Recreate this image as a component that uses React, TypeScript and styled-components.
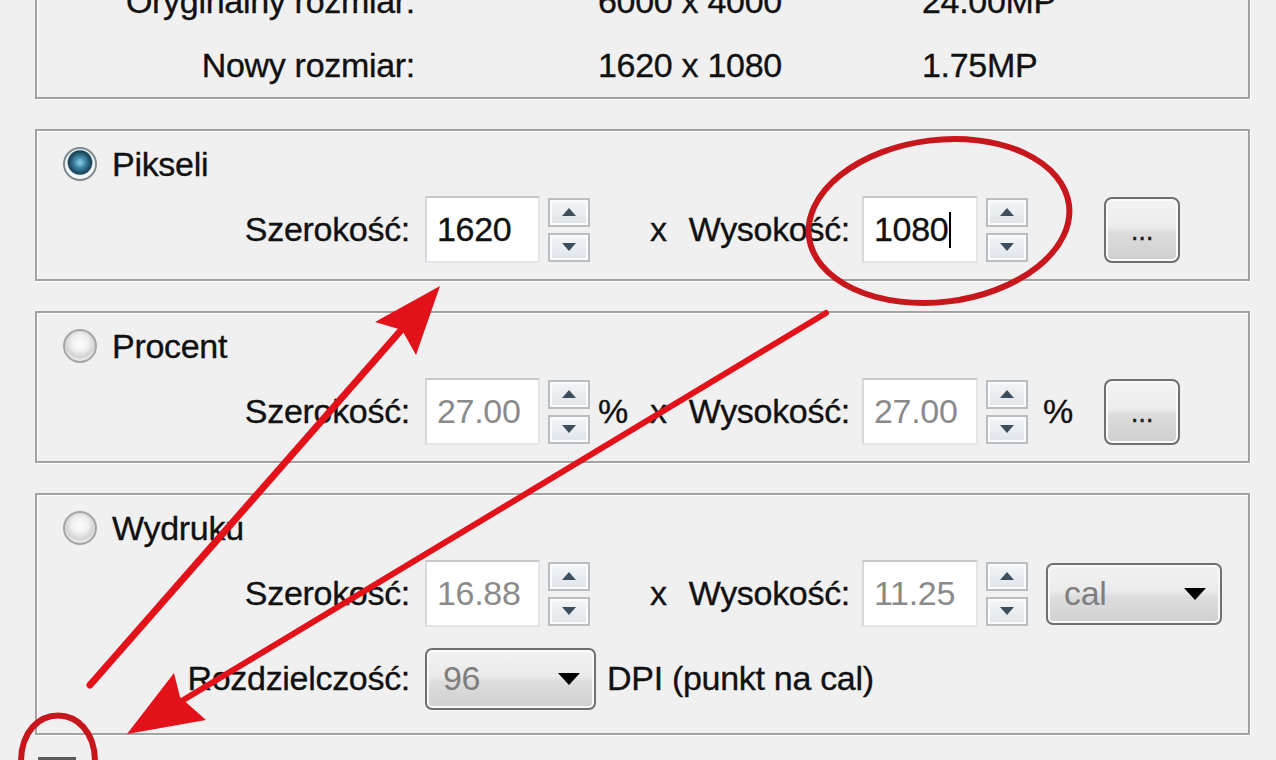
import React from "react";
import styled, { createGlobalStyle } from "styled-components";

const Global = createGlobalStyle`
  html, body { margin: 0; padding: 0; overflow: hidden; background: #f0f0f0; }
  body { font-family: "Liberation Sans", Arial, sans-serif; color: #111; }
`;

const Page = styled.div`
  position: relative;
  width: 1276px;
  height: 760px;
  overflow: hidden;
  padding-left: 35px;
  box-sizing: border-box;
  font-size: 34px;
  letter-spacing: -0.3px;
  -webkit-text-stroke: 0.35px currentColor;
`;

const Group = styled.div<{ $top?: boolean; $pb?: number }>`
  width: 1215px;
  box-sizing: border-box;
  border: 2px solid #a2a2a2;
  box-shadow: inset 1px 1px 0 #fff, 1px 1px 0 #fff;
  margin-top: ${(p) => (p.$top ? "-60px" : "30px")};
  padding: ${(p) => (p.$top ? "27px 0 0 0" : `16px 0 ${p.$pb ?? 16}px 0`)};
  display: flex;
  flex-direction: column;
  gap: 15px;
`;

const InfoGrid = styled.div`
  display: grid;
  grid-template-columns: 378px 141px 1fr;
  column-gap: 183px;
  grid-auto-rows: 64px;
  align-items: center;
  white-space: nowrap;
`;

const InfoLabel = styled.div`
  text-align: right;
`;

const InfoValue = styled.div``;

const RadioRow = styled.label`
  display: flex;
  align-items: center;
  height: 34px;
  padding-left: 26px;
  gap: 15px;
`;

const Radio = styled.span<{ $checked?: boolean }>`
  width: 34px;
  height: 34px;
  border-radius: 50%;
  box-sizing: border-box;
  border: 2px solid ${(p) => (p.$checked ? "#7f8a90" : "#a6a6a6")};
  background: ${(p) =>
    p.$checked
      ? "radial-gradient(circle at 50% 45%, #8fd0ea 0, #3d86a6 25%, #163e52 52%, #e9f2f6 58%, #ffffff 72%, #cfd6da 100%)"
      : "radial-gradient(circle at 50% 40%, #fdfdfd 0, #f0f0f0 35%, #d2d2d2 62%, #ececec 72%, #c4c4c4 100%)"};
  flex: none;
`;

const Row = styled.div<{ $mt?: number }>`
  display: flex;
  align-items: center;
  height: 67px;
  margin-top: ${(p) => p.$mt ?? 0}px;
  white-space: nowrap;
`;

const FieldLabel = styled.span<{ $w: number; $mr: number }>`
  width: ${(p) => p.$w}px;
  margin-right: ${(p) => p.$mr}px;
  text-align: right;
  flex: none;
`;

const Slot = styled.span<{ $w: number; $pl: number }>`
  width: ${(p) => p.$w}px;
  padding-left: ${(p) => p.$pl}px;
  box-sizing: border-box;
  flex: none;
`;

const Input = styled.div<{ $w: number; $disabled?: boolean }>`
  width: ${(p) => p.$w}px;
  height: 67px;
  box-sizing: border-box;
  background: #fff;
  border: 2px solid #e2e6ea;
  border-top-color: #c4c8cc;
  border-left-color: #d6dadd;
  padding-left: 10px;
  display: flex;
  align-items: center;
  color: ${(p) => (p.$disabled ? "#8a8a8a" : "#111")};
  -webkit-text-stroke: ${(p) => (p.$disabled ? "0" : "0.35px currentColor")};
  flex: none;
`;

const Caret = styled.span`
  display: inline-block;
  width: 2px;
  height: 36px;
  background: #000;
  margin-left: 1px;
`;

const Spin = styled.div`
  display: flex;
  flex-direction: column;
  gap: 6px;
  margin-left: 8px;
  width: 42px;
  flex: none;
`;

const SpinBtn = styled.div<{ $down?: boolean }>`
  height: 29px;
  box-sizing: border-box;
  border: 2px solid #b9bec3;
  box-shadow: inset 0 0 0 2px #fafbfc;
  background: linear-gradient(#f4f6f8, #dfe4e9);
  display: flex;
  align-items: center;
  justify-content: center;
  &::after {
    content: "";
    width: 0;
    height: 0;
    border-left: 7px solid transparent;
    border-right: 7px solid transparent;
    ${(p) =>
      p.$down ? "border-top: 8px solid #3f4e5c;" : "border-bottom: 8px solid #3f4e5c;"}
  }
`;

const DotsButton = styled.div`
  width: 76px;
  height: 66px;
  box-sizing: border-box;
  margin-left: 14px;
  border: 2px solid #6f6f6f;
  border-radius: 8px;
  box-shadow: inset 0 0 0 2px #fbfbfb;
  background: linear-gradient(#f3f3f3 0%, #ececec 45%, #dcdcdc 55%, #cfcfcf 100%);
  display: flex;
  align-items: flex-end;
  justify-content: center;
  padding-bottom: 16px;
  font-size: 28px;
  line-height: 1;
  color: #222;
  flex: none;
`;

const Select = styled.div<{ $w: number; $ml: number }>`
  width: ${(p) => p.$w}px;
  height: 62px;
  margin-left: ${(p) => p.$ml}px;
  box-sizing: border-box;
  border: 2px solid #707070;
  border-radius: 7px;
  box-shadow: inset 0 0 0 2px #f9f9f9;
  background: linear-gradient(#f2f2f2 0%, #ebebeb 45%, #dddddd 55%, #d0d0d0 100%);
  display: flex;
  align-items: center;
  justify-content: space-between;
  padding: 0 14px 0 16px;
  color: #7e7e7e;
  -webkit-text-stroke: 0;
  flex: none;
  &::after {
    content: "";
    border-left: 11px solid transparent;
    border-right: 11px solid transparent;
    border-top: 12px solid #000;
  }
`;

const CheckRow = styled.div`
  display: flex;
  align-items: flex-start;
  gap: 18px;
  margin-top: 22px;
  margin-left: 3px;
`;

const CheckBox = styled.span`
  width: 38px;
  height: 38px;
  box-sizing: border-box;
  border: 3px solid #5c5c5c;
  background: linear-gradient(#d8d8d8, #f4f4f4);
  flex: none;
`;

const CheckText = styled.span`
  padding-top: 20px;
`;

const Overlay = styled.svg`
  position: absolute;
  left: 0;
  top: 0;
  pointer-events: none;
`;

const SizeRow: React.FC<{
  w: string;
  h: string;
  unit?: string;
  disabled?: boolean;
  caret?: boolean;
  tail: "dots" | "select";
}> = ({ w, h, unit, disabled, caret, tail }) => (
  <Row>
    <FieldLabel $w={373} $mr={15}>Szerokość:</FieldLabel>
    <Input $w={115} $disabled={disabled}>{w}</Input>
    <Spin>
      <SpinBtn />
      <SpinBtn $down />
    </Spin>
    <Slot $w={50} $pl={8}>{unit ?? ""}</Slot>
    <Slot $w={46} $pl={10}>x</Slot>
    <FieldLabel $w={164} $mr={12}>Wysokość:</FieldLabel>
    <Input $w={116} $disabled={disabled}>
      {h}
      {caret && <Caret />}
    </Input>
    <Spin>
      <SpinBtn />
      <SpinBtn $down />
    </Spin>
    {tail === "dots" ? (
      <>
        <Slot $w={62} $pl={15}>{unit ?? ""}</Slot>
        <DotsButton>...</DotsButton>
      </>
    ) : (
      <Select $w={176} $ml={18}>cal</Select>
    )}
  </Row>
);

export default function App() {
  return (
    <>
      <Global />
      <Page>
        <Group $top>
          <InfoGrid>
            <InfoLabel>Oryginalny rozmiar:</InfoLabel>
            <InfoValue>6000 x 4000</InfoValue>
            <InfoValue>24.00MP</InfoValue>
            <InfoLabel>Nowy rozmiar:</InfoLabel>
            <InfoValue>1620 x 1080</InfoValue>
            <InfoValue>1.75MP</InfoValue>
          </InfoGrid>
        </Group>

        <Group>
          <RadioRow>
            <Radio $checked />
            Pikseli
          </RadioRow>
          <SizeRow w="1620" h="1080" caret tail="dots" />
        </Group>

        <Group>
          <RadioRow>
            <Radio />
            Procent
          </RadioRow>
          <SizeRow w="27.00" h="27.00" unit="%" disabled tail="dots" />
        </Group>

        <Group $pb={21}>
          <RadioRow>
            <Radio />
            Wydruku
          </RadioRow>
          <SizeRow w="16.88" h="11.25" disabled tail="select" />
          <Row $mt={3}>
            <FieldLabel $w={373} $mr={15}>Rozdzielczość:</FieldLabel>
            <Select $w={171} $ml={0}>96</Select>
            <Slot $w={300} $pl={11}>DPI (punkt na cal)</Slot>
          </Row>
        </Group>

        <CheckRow>
          <CheckBox />
          <CheckText>Zachowaj proporcje</CheckText>
        </CheckRow>

        <Overlay width="1276" height="760" viewBox="0 0 1276 760">
          <ellipse
            cx="939"
            cy="221"
            rx="131"
            ry="81"
            transform="rotate(-7 939 221)"
            fill="none"
            stroke="#c8161d"
            strokeWidth="6"
          />
          <line x1="90" y1="685" x2="410" y2="320" stroke="#e3121a" strokeWidth="7" strokeLinecap="round" />
          <polygon points="440,286 416,355 402,330 375,322" fill="#e3121a" />
          <line x1="826" y1="313" x2="165" y2="711" stroke="#e3121a" strokeWidth="6" strokeLinecap="round" />
          <polygon points="127,734 174,673 180,697 206,720" fill="#e3121a" />
          <path d="M 21 762 C 21 700, 95 700, 95 762" fill="none" stroke="#c8161d" strokeWidth="6" />
        </Overlay>
      </Page>
    </>
  );
}
